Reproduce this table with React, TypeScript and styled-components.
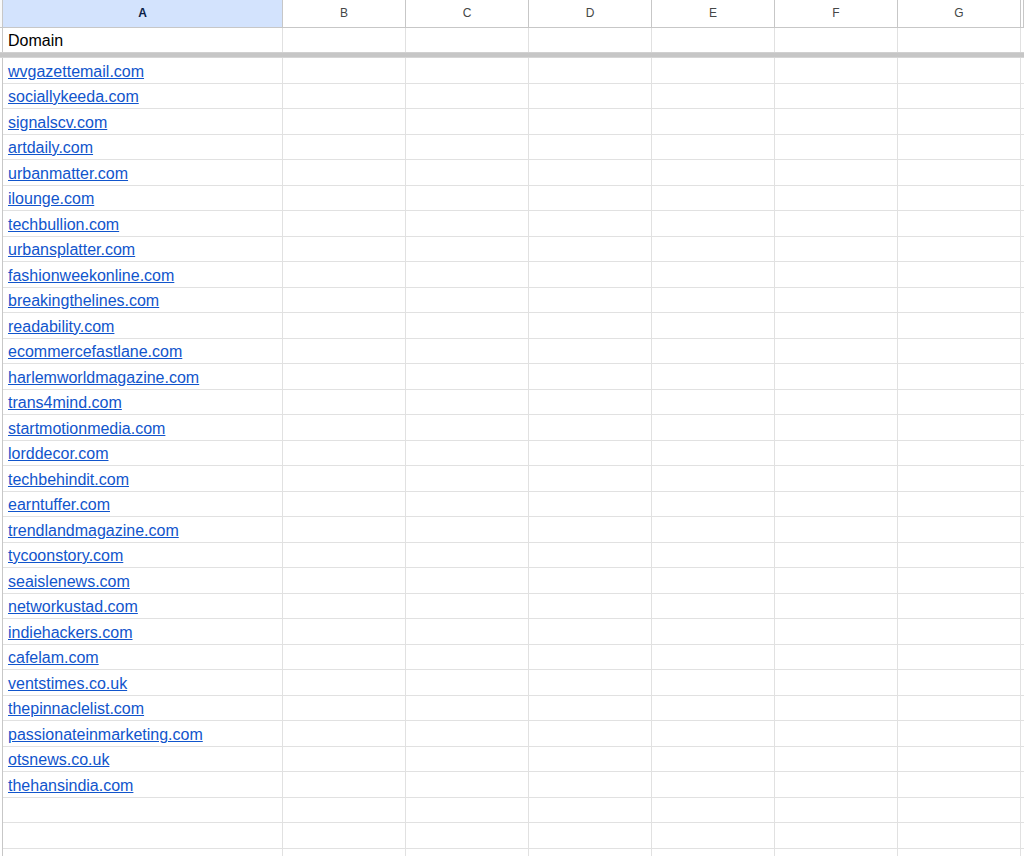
import React from "react";
import styled, { createGlobalStyle } from "styled-components";

const GlobalStyle = createGlobalStyle`
  html, body {
    margin: 0;
    padding: 0;
    background: #ffffff;
    overflow: hidden;
  }
  body {
    font-family: "Liberation Sans", Arial, sans-serif;
  }
`;

const domains = [
  "wvgazettemail.com",
  "sociallykeeda.com",
  "signalscv.com",
  "artdaily.com",
  "urbanmatter.com",
  "ilounge.com",
  "techbullion.com",
  "urbansplatter.com",
  "fashionweekonline.com",
  "breakingthelines.com",
  "readability.com",
  "ecommercefastlane.com",
  "harlemworldmagazine.com",
  "trans4mind.com",
  "startmotionmedia.com",
  "lorddecor.com",
  "techbehindit.com",
  "earntuffer.com",
  "trendlandmagazine.com",
  "tycoonstory.com",
  "seaislenews.com",
  "networkustad.com",
  "indiehackers.com",
  "cafelam.com",
  "ventstimes.co.uk",
  "thepinnaclelist.com",
  "passionateinmarketing.com",
  "otsnews.co.uk",
  "thehansindia.com",
];

const columns = ["A", "B", "C", "D", "E", "F", "G"];
const TOTAL_ROWS = 32;

const Sheet = styled.div`
  width: 1024px;
  height: 856px;
  overflow: hidden;
  display: flex;
  flex-direction: column;
  background: #fff;
`;

const Row = styled.div<{ $h: number }>`
  display: grid;
  grid-template-columns: 3px 280px repeat(6, 123px) 1fr;
  height: ${(p) => p.$h}px;
  flex: none;
`;

const Gutter = styled.div`
  border-right: 1px solid #c7c7c7;
  background: #fff;
`;

const HeaderGutter = styled.div`
  border-right: 1px solid #c7c7c7;
  border-bottom: 1px solid #c7c7c7;
  background: #f8f9fa;
`;

const ColHeader = styled.div<{ $selected?: boolean }>`
  box-sizing: border-box;
  border-right: 1px solid #c7c7c7;
  border-bottom: 1px solid #c7c7c7;
  background: ${(p) => (p.$selected ? "#d3e3fd" : "#ffffff")};
  color: ${(p) => (p.$selected ? "#0b1d46" : "#444746")};
  font-weight: ${(p) => (p.$selected ? 700 : 400)};
  font-size: 12px;
  line-height: 27px;
  text-align: center;
`;

const Cell = styled.div<{ $noBottom?: boolean }>`
  box-sizing: border-box;
  border-right: 1px solid #e1e1e1;
  border-bottom: ${(p) => (p.$noBottom ? "none" : "1px solid #e1e1e1")};
  display: flex;
  align-items: flex-end;
  padding: 0 0 2px 5px;
  font-size: 16px;
  line-height: 18px;
  color: #000;
  white-space: nowrap;
  overflow: hidden;
`;

const Link = styled.a`
  color: #1155cc;
  text-decoration: underline;
  text-underline-offset: 1px;
`;

const FreezeBar = styled.div`
  height: 6px;
  flex: none;
  background: linear-gradient(
    to bottom,
    #dadada 0px,
    #c6c6c6 1px,
    #c6c6c6 5px,
    #e4e4e4 6px
  );
`;

const DataRows = styled.div`
  display: flex;
  flex-direction: column;
`;

const DataRow = styled.div`
  display: grid;
  grid-template-columns: 3px 280px repeat(6, 123px) 1fr;
  height: 25.5px;
  flex: none;
`;

const EmptyCells: React.FC = () => (
  <>
    {columns.slice(1).map((c) => (
      <Cell key={c} />
    ))}
    <Cell />
  </>
);

export default function App() {
  const rows = Array.from({ length: TOTAL_ROWS }, (_, i) => domains[i]);
  return (
    <>
      <GlobalStyle />
      <Sheet>
        <Row $h={28}>
          <HeaderGutter />
          {columns.map((c) => (
            <ColHeader key={c} $selected={c === "A"}>
              {c}
            </ColHeader>
          ))}
          <ColHeader />
        </Row>
        <Row $h={24}>
          <Gutter />
          <Cell $noBottom>Domain</Cell>
          {columns.slice(1).map((c) => (
            <Cell key={c} $noBottom />
          ))}
          <Cell $noBottom />
        </Row>
        <FreezeBar />
        <DataRows>
          {rows.map((d, i) => (
            <DataRow key={i}>
              <Gutter />
              <Cell>{d ? <Link href="#">{d}</Link> : null}</Cell>
              <EmptyCells />
            </DataRow>
          ))}
        </DataRows>
      </Sheet>
    </>
  );
}
